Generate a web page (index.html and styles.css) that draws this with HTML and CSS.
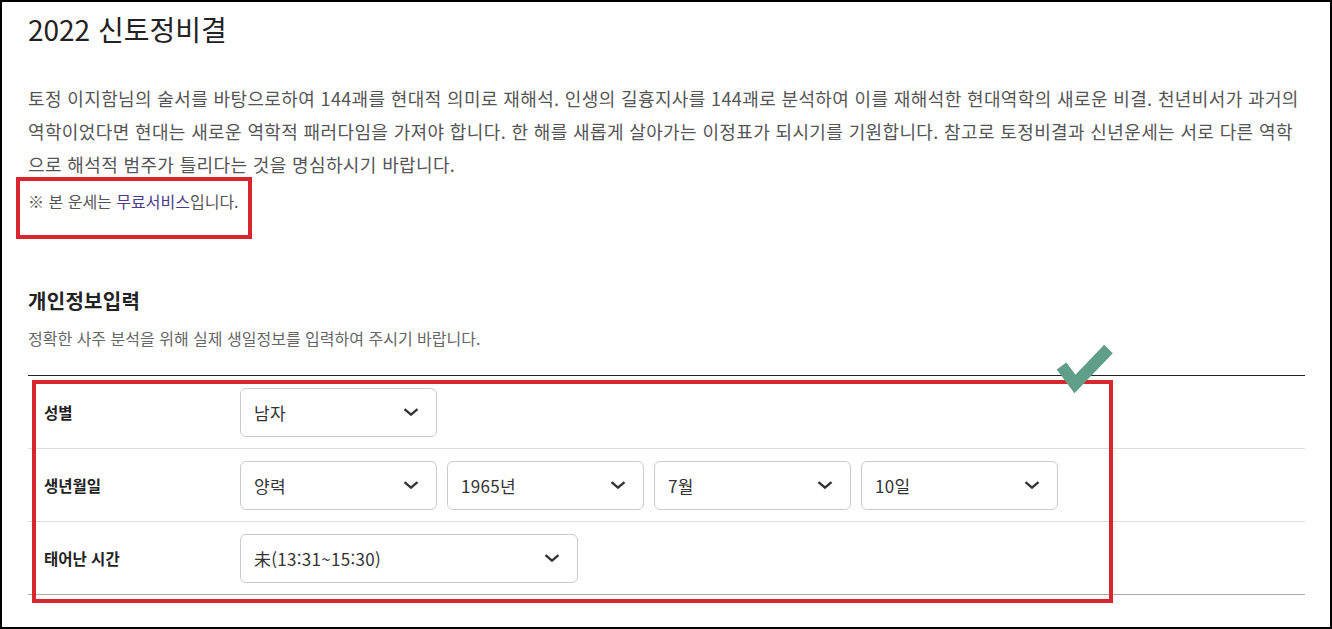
FILE: index.html
```html
<!DOCTYPE html>
<html lang="ko">
<head>
<meta charset="utf-8">
<title>2022 신토정비결</title>
<link rel="stylesheet" href="styles.css">
</head>
<body>
<div class="page">
  <h1 class="title">2022 신토정비결</h1>
  <p class="desc">토정 이지함님의 술서를 바탕으로하여 144괘를 현대적 의미로 재해석. 인생의 길흉지사를 144괘로 분석하여 이를 재해석한 현대역학의 새로운 비결. 천년비서가 과거의 역학이었다면 현대는 새로운 역학적 패러다임을 가져야 합니다. 한 해를 새롭게 살아가는 이정표가 되시기를 기원합니다. 참고로 토정비결과 신년운세는 서로 다른 역학으로 해석적 범주가 틀리다는 것을 명심하시기 바랍니다.</p>
  <p class="note">※ 본 운세는 <span class="free">무료서비스</span>입니다.</p>

  <section class="info">
    <h2 class="info-title">개인정보입력</h2>
    <p class="info-sub">정확한 사주 분석을 위해 실제 생일정보를 입력하여 주시기 바랍니다.</p>

    <div class="form-table">
      <div class="row">
        <div class="label">성별</div>
        <div class="fields">
          <div class="select">남자<svg class="chev" viewBox="0 0 16 8"><path d="M1.5 1.2 L8 6.6 L14.5 1.2"/></svg></div>
        </div>
      </div>
      <div class="row">
        <div class="label">생년월일</div>
        <div class="fields">
          <div class="select">양력<svg class="chev" viewBox="0 0 16 8"><path d="M1.5 1.2 L8 6.6 L14.5 1.2"/></svg></div>
          <div class="select">1965년<svg class="chev" viewBox="0 0 16 8"><path d="M1.5 1.2 L8 6.6 L14.5 1.2"/></svg></div>
          <div class="select">7월<svg class="chev" viewBox="0 0 16 8"><path d="M1.5 1.2 L8 6.6 L14.5 1.2"/></svg></div>
          <div class="select">10일<svg class="chev" viewBox="0 0 16 8"><path d="M1.5 1.2 L8 6.6 L14.5 1.2"/></svg></div>
        </div>
      </div>
      <div class="row row-last">
        <div class="label">태어난 시간</div>
        <div class="fields">
          <div class="select select-wide">未(13:31~15:30)<svg class="chev" viewBox="0 0 16 8"><path d="M1.5 1.2 L8 6.6 L14.5 1.2"/></svg></div>
        </div>
      </div>
    </div>
  </section>

  <div class="mark mark-note"></div>
  <div class="mark mark-form"></div>
  <svg class="check" viewBox="0 0 70 60"><path d="M11.5 26 L25 44 L58.5 9"/></svg>
</div>
</body>
</html>
```

FILE: styles.css
```css
* { box-sizing: border-box; }
html, body { margin: 0; padding: 0; background: #fff; }
body {
  font-family: "Noto Sans CJK KR", "Noto Sans", sans-serif;
  color: #333;
}
.page {
  position: relative;
  width: 1332px;
  height: 629px;
  border: 2px solid #000;
  padding: 7px 25px 0 26px;
  overflow: hidden;
}
.title {
  margin: 0;
  font-size: 28px;
  line-height: 40px;
  font-weight: 400;
  color: #222;
}
.desc {
  margin: 33px 0 0;
  font-size: 18px;
  line-height: 33px;
  letter-spacing: 0.37px;
  color: #555;
}
.note {
  margin: 8px 0 0;
  font-size: 16px;
  line-height: 24px;
  color: #555;
}
.free { color: #4b3a8c; }
.info { margin-top: 74px; }
.info-title {
  margin: 0;
  font-size: 20px;
  line-height: 28px;
  letter-spacing: 0.3px;
  font-weight: 700;
  color: #222;
}
.info-sub {
  margin: 11px 0 0;
  font-size: 16px;
  line-height: 24px;
  color: #666;
}
.form-table {
  margin-top: 25px;
  border-top: 1px solid #222;
}
.row {
  display: flex;
  align-items: center;
  height: 73px;
  border-bottom: 1px solid #ddd;
}
.row-last { border-bottom-color: #aaa; }
.label {
  width: 212px;
  padding-left: 16px;
  font-size: 15.5px;
  font-weight: 700;
  color: #222;
}
.fields {
  display: flex;
  gap: 10px;
}
.select {
  display: flex;
  align-items: center;
  justify-content: space-between;
  width: 197px;
  height: 49px;
  padding: 0 17px 0 13px;
  border: 1px solid #ccc;
  border-radius: 6px;
  font-size: 17px;
  letter-spacing: 0.3px;
  color: #333;
  background: #fff;
}
.select-wide { width: 338px; }
.chev {
  width: 16px;
  height: 8px;
  fill: none;
  stroke: #333;
  stroke-width: 2.4;
}
.mark {
  position: absolute;
  border: 4px solid #d9262e;
}
.mark-note {
  left: 14px;
  top: 175px;
  width: 236px;
  height: 62px;
}
.mark-form {
  left: 30px;
  top: 378px;
  width: 1081px;
  height: 223px;
}
.check {
  position: absolute;
  left: 1048px;
  top: 338px;
  width: 70px;
  height: 60px;
  fill: none;
  stroke: #5f9e88;
  stroke-width: 12;
}
```
